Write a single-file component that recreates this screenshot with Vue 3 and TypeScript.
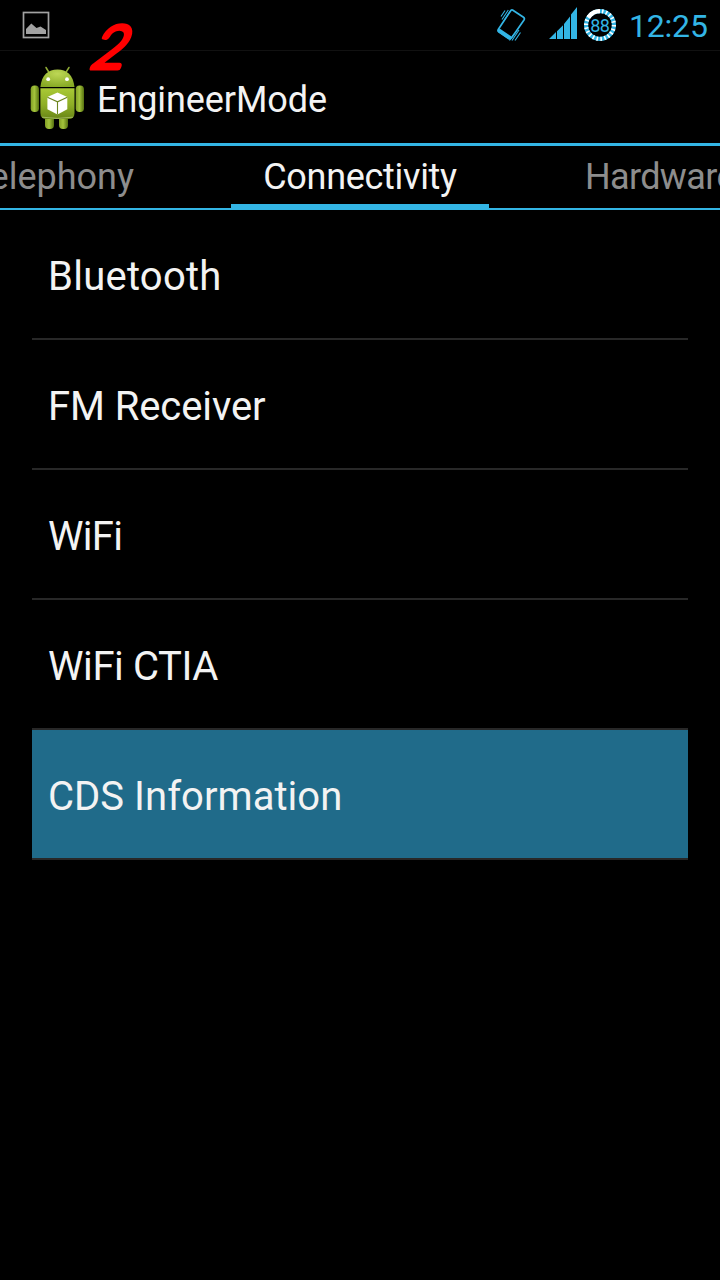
<script setup lang="ts">
interface Entry {
  label: string
  selected?: boolean
  spacing: string
}

const entries: Entry[] = [
  { label: 'Bluetooth', spacing: '0.25px' },
  { label: 'FM Receiver', spacing: '-0.1px' },
  { label: 'WiFi', spacing: '-0.7px' },
  { label: 'WiFi CTIA', spacing: '-0.4px' },
  { label: 'CDS Information', selected: true, spacing: '0.04px' },
]
</script>

<template>
  <main class="screen">
    <header class="status">
      <svg class="picture" width="28" height="28" viewBox="0 0 28 28">
        <rect x="1.5" y="1.5" width="25" height="25" fill="none" stroke="#a2a2a2" stroke-width="1.7" />
        <path d="M4 23V18L9.3 12.5L14.5 17L18.5 15.5L24 19V23Z" fill="#a2a2a2" />
      </svg>
      <div class="indicators">
        <svg width="122" height="50" viewBox="496 0 122 50">
          <g fill="none" stroke="#33b5e5">
            <path d="M512.5 10L523.5 17.3Q525 18.4 524 20L511.5 38Q510.2 39.4 508.5 38.3L498.5 31.5Q497.5 30.6 498.4 29.2L510.5 11Q511.3 9.5 512.5 10Z" stroke-width="1.7" />
            <path d="M501 16.5L505 10.5M502 19.5L508.3 10M503.8 21L511 10M512 40.5L519 30M515 40.5L520.5 32.5M509.5 40.5L514 34" stroke-width="1.1" />
          </g>
          <path d="M497.5 30L500 28.8L511.5 36.5L511 39.5L508.5 39.5L498 32.3Z" fill="#33b5e5" />
          <path d="M549 39L556 32V39ZM557 31.3L563 25.3V39H557ZM564 24L570 16.5V39H564ZM571 14.5L577 7V39H571Z" fill="#33b5e5" />
          <circle cx="600" cy="25" r="13.9" fill="none" stroke="#33b5e5" stroke-width="4.2" />
          <circle cx="600" cy="25" r="13.9" fill="none" stroke="#fff" stroke-width="4.2" pathLength="66" stroke-dasharray="1.2 1.8" />
          <path d="M588.5 17.2A13.9 13.9 0 0 1 600 11.1" fill="none" stroke="#fff" stroke-width="4.2" />
          <text x="599.8" y="31.8" text-anchor="middle" class="charge">88</text>
        </svg>
        <span class="clock">12:25</span>
      </div>
    </header>

    <div class="actionbar">
      <svg class="robot" width="56" height="66" viewBox="29 65 56 66">
        <defs>
          <linearGradient id="bodyFill" x2="0" y2="1">
            <stop offset="0" stop-color="#a9c936" /><stop offset="0.55" stop-color="#8dad25" /><stop offset="1" stop-color="#688516" />
          </linearGradient>
          <linearGradient id="limbFill">
            <stop offset="0" stop-color="#829f25" /><stop offset="0.45" stop-color="#a4c43c" /><stop offset="1" stop-color="#55700f" />
          </linearGradient>
          <radialGradient id="headFill" cx="0.5" cy="0.25" r="0.75">
            <stop offset="0" stop-color="#bdd755" /><stop offset="1" stop-color="#88aa25" />
          </radialGradient>
        </defs>
        <path d="M46 67.5L49.3 73M69 67.5L65.5 73" stroke="#91ad37" stroke-width="1.5" stroke-linecap="round" />
        <rect x="45" y="112" width="9" height="17" rx="4" fill="url(#limbFill)" />
        <rect x="59" y="112" width="9" height="17" rx="4" fill="url(#limbFill)" />
        <rect x="30.7" y="85.5" width="8.3" height="26.5" rx="3.8" fill="url(#limbFill)" />
        <rect x="75.7" y="85.5" width="8.3" height="26.5" rx="3.8" fill="url(#limbFill)" />
        <path d="M40.4 87C41.5 75 48 69.4 57.5 69.4S73.2 75 74.5 87Z" fill="url(#headFill)" />
        <path d="M40.4 88.2H74.5V113Q74.5 119 68.5 119H46.4Q40.4 119 40.4 113Z" fill="url(#bodyFill)" />
        <path d="M42 117.2Q57 119.6 73 117.2" fill="none" stroke="#b9cc7b" stroke-width="0.7" />
        <circle cx="48.2" cy="79.2" r="1.9" fill="#fff" /><circle cx="67" cy="79.2" r="1.9" fill="#fff" />
        <path d="M57.5 92.6L67.3 97V109.2L57.5 114.5L47.4 109.2V97Z" fill="#fff" />
        <path d="M47.4 97.2L57.5 101.8L67.3 97.2M57.5 101.8V114.5" fill="none" stroke="#6d851f" stroke-width="1.1" />
      </svg>
      <h1>EngineerMode</h1>
      <svg class="mark" width="70" height="76" viewBox="0 0 70 76">
        <text transform="translate(13 58) skewX(-20) scale(0.97 1)">2</text>
      </svg>
    </div>

    <nav class="tabs">
      <span class="tab left">Telephony</span>
      <span class="tab active">Connectivity</span>
      <span class="tab right">Hardware</span>
    </nav>

    <ul class="list">
      <li v-for="e in entries" :key="e.label" :class="{ selected: e.selected }" :style="{ letterSpacing: e.spacing }">{{ e.label }}</li>
    </ul>
  </main>
</template>

<style>
html, body { margin: 0; background: #000; overflow: hidden; }
</style>

<style scoped>
.screen { width: 720px; height: 1280px; overflow: hidden; background: #000; color: #f3f3f3; font-family: Roboto, sans-serif; }
.status { box-sizing: border-box; height: 51px; display: flex; justify-content: space-between; border-bottom: 1px solid #111; padding: 0 12px 0 22px; }
.picture { margin-top: 11px; }
.indicators { display: flex; height: 50px; }
.clock { width: 79px; margin-left: 11px; font-size: 32px; line-height: 52px; letter-spacing: -0.2px; color: #33b5e5; white-space: nowrap; }
.charge { font: 400 18px Roboto, sans-serif; letter-spacing: -0.5px; fill: #33b5e5; }
.actionbar { position: relative; box-sizing: border-box; height: 95px; border-bottom: 3px solid #33b5e5; display: flex; padding-left: 29px; }
.robot { margin-top: 14px; }
h1 { margin: 0 0 0 12px; font-size: 36px; font-weight: 400; line-height: 99px; letter-spacing: -0.08px; height: 92px; white-space: nowrap; }
.mark { position: absolute; left: 76px; top: -41px; overflow: visible; }
.mark text { font: 300 59px Lato, sans-serif; fill: red; stroke: red; stroke-width: 5.2px; stroke-linejoin: round; }
.tabs { box-sizing: border-box; height: 64px; border-bottom: 2px solid #33b5e5; display: grid; grid-template-columns: 231px 258px 231px; overflow: hidden; font-size: 36px; line-height: 62px; white-space: nowrap; }
.tab { color: #8d8d8d; }
.left { display: flex; justify-content: flex-end; padding-right: 97px; }
.active { box-sizing: border-box; height: 62px; border-bottom: 4px solid #33b5e5; color: #f3f3f3; text-align: center; letter-spacing: -0.3px; }
.right { padding-left: 96px; letter-spacing: -0.65px; }
.list { margin: 0 32px; padding: 0; list-style: none; }
.list li { box-sizing: border-box; height: 130px; padding-left: 16px; border-bottom: 2px solid #282828; font-size: 40px; line-height: 134px; white-space: nowrap; }
.list .selected { background: #206b8a; background-clip: padding-box; }
</style>
